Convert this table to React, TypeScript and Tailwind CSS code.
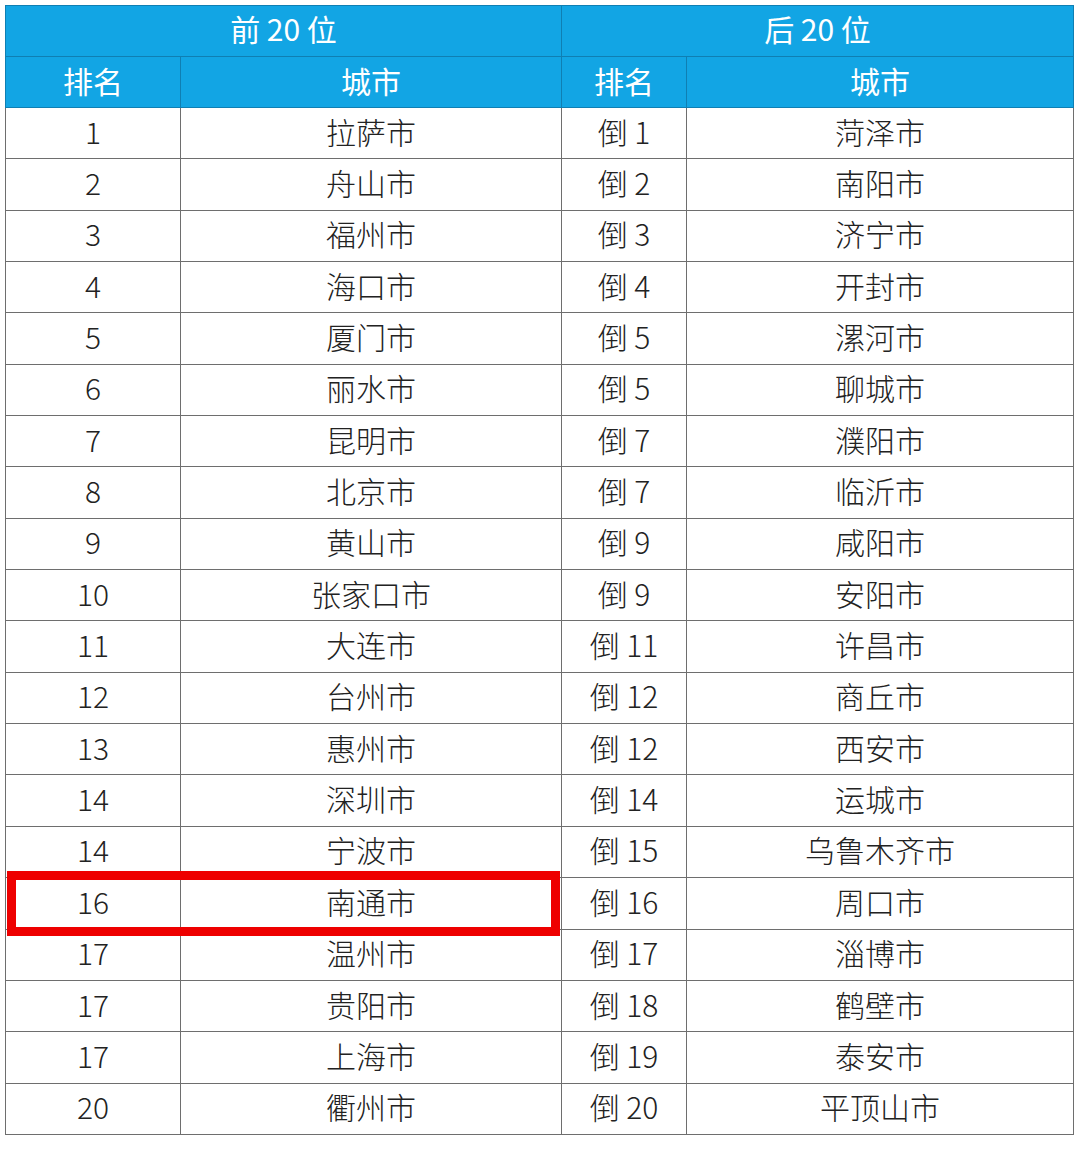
import React from "react";

const top = [
  ["1", "拉萨市"], ["2", "舟山市"], ["3", "福州市"], ["4", "海口市"], ["5", "厦门市"],
  ["6", "丽水市"], ["7", "昆明市"], ["8", "北京市"], ["9", "黄山市"], ["10", "张家口市"],
  ["11", "大连市"], ["12", "台州市"], ["13", "惠州市"], ["14", "深圳市"], ["14", "宁波市"],
  ["16", "南通市"], ["17", "温州市"], ["17", "贵阳市"], ["17", "上海市"], ["20", "衢州市"],
];
const bottom = [
  ["倒 1", "菏泽市"], ["倒 2", "南阳市"], ["倒 3", "济宁市"], ["倒 4", "开封市"], ["倒 5", "漯河市"],
  ["倒 5", "聊城市"], ["倒 7", "濮阳市"], ["倒 7", "临沂市"], ["倒 9", "咸阳市"], ["倒 9", "安阳市"],
  ["倒 11", "许昌市"], ["倒 12", "商丘市"], ["倒 12", "西安市"], ["倒 14", "运城市"], ["倒 15", "乌鲁木齐市"],
  ["倒 16", "周口市"], ["倒 17", "淄博市"], ["倒 18", "鹤壁市"], ["倒 19", "泰安市"], ["倒 20", "平顶山市"],
];

const font = {
  fontFamily: '"Noto Sans CJK SC", "Noto Sans", sans-serif',
};

export default function App() {
  return (
    <div className="w-[1080px] h-[1149px] bg-white relative" style={font}>
      <div className="pt-[5px] pl-[5px]">
        <table className="border-collapse table-fixed w-[1068px] font-light">
          <colgroup>
            <col className="w-[175px]" />
            <col className="w-[381px]" />
            <col className="w-[125px]" />
            <col className="w-[387px]" />
          </colgroup>
          <thead>
            <tr className="h-[51px] bg-[#12a5e4] text-white text-[30px]">
              <th colSpan={2} className="border border-[#0f7fb3] font-normal leading-none pb-[6px]">前 20 位</th>
              <th colSpan={2} className="border border-[#0f7fb3] font-normal leading-none pb-[6px]">后 20 位</th>
            </tr>
            <tr className="h-[51px] bg-[#12a5e4] text-white text-[30px]">
              <th className="border border-[#0f7fb3] font-normal leading-none pb-[5px]">排名</th>
              <th className="border border-[#0f7fb3] font-normal leading-none pb-[5px]">城市</th>
              <th className="border border-[#0f7fb3] font-normal leading-none pb-[5px]">排名</th>
              <th className="border border-[#0f7fb3] font-normal leading-none pb-[5px]">城市</th>
            </tr>
          </thead>
          <tbody className="text-[30px] text-[#222222]">
            {top.map((r, i) => (
              <tr key={i} className="h-[51.35px]">
                <td className="border border-[#6e6e6e] text-center leading-none pb-[5px]">{r[0]}</td>
                <td className="border border-[#6e6e6e] text-center leading-none pb-[5px]">{r[1]}</td>
                <td className="border border-[#6e6e6e] text-center leading-none pb-[5px]">{bottom[i][0]}</td>
                <td className="border border-[#6e6e6e] text-center leading-none pb-[5px]">{bottom[i][1]}</td>
              </tr>
            ))}
          </tbody>
        </table>
      </div>
      <div className="absolute left-[7px] top-[871px] w-[553px] h-[65px] border-[9px] border-[#ee0000]" />
    </div>
  );
}
